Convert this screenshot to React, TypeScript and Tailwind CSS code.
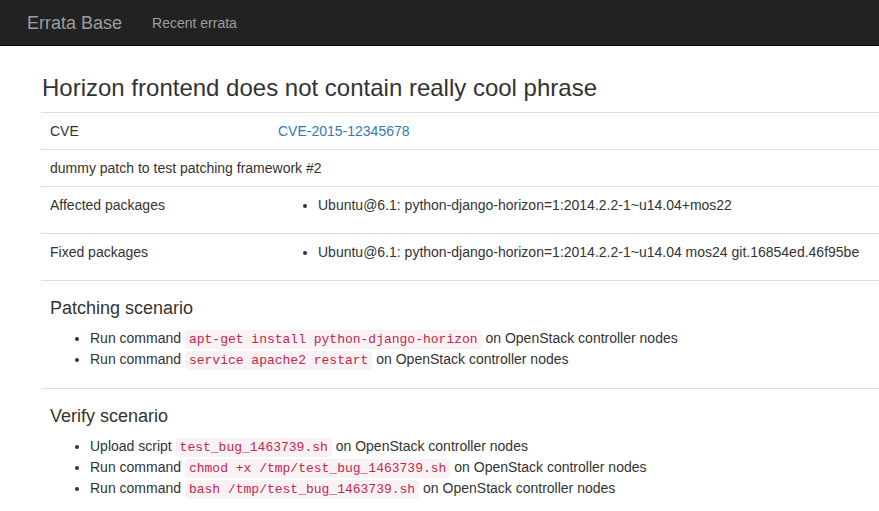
import React from 'react';

function Code({ children }: { children: React.ReactNode }) {
  return (
    <code className="rounded bg-[#f9f2f4] px-1 py-0.5 font-['Liberation_Mono',monospace] text-[13px] leading-none text-[#c7254e]">
      {children}
    </code>
  );
}

function Scenario({ title, steps }: { title: string; steps: [string, string][] }) {
  return (
    <tr>
      <td colSpan={2} className="border-t border-[#ddd] py-2 pr-2 pl-[9px] align-top">
        <h4 className="mt-[9px] mb-[10px] text-[18px] leading-[20px]">{title}</h4>
        <ul className="mb-[10px] list-disc pl-10">
          {steps.map(([label, cmd]) => (
            <li key={cmd} className="leading-[21px]">
              {label} <Code>{cmd}</Code> on OpenStack controller nodes
            </li>
          ))}
        </ul>
      </td>
    </tr>
  );
}

function App() {
  return (
    <div className="min-h-screen bg-white font-['Liberation_Sans',Arial,sans-serif] text-[14px] leading-[20px] text-[#333]">
      <nav className="flex h-[46px] items-center border-b border-[#080808] bg-[#222] pl-[27px]">
        <span className="text-[18px] text-[#9d9d9d]">Errata Base</span>
        <span className="ml-[30px] text-[#9d9d9d]">Recent errata</span>
      </nav>

      <div className="pl-[41px]">
        <h1 className="mt-[29px] mb-[11px] pl-[1px] text-[24px] leading-[26px]">
          Horizon frontend does not contain really cool phrase
        </h1>

        <table className="w-full border-collapse text-left">
          <tbody>
            <tr>
              <td className="w-[228px] border-t border-[#ddd] py-2 pr-2 pl-[9px]">CVE</td>
              <td className="border-t border-[#ddd] py-2 pr-2 pl-[9px]">
                <a href="#" className="text-[#337ab7]">CVE-2015-12345678</a>
              </td>
            </tr>
            <tr>
              <td colSpan={2} className="border-t border-[#ddd] py-2 pr-2 pl-[9px]">
                dummy patch to test patching framework #2
              </td>
            </tr>
            <tr>
              <td className="border-t border-[#ddd] py-2 pr-2 pl-[9px] align-top">Affected packages</td>
              <td className="border-t border-[#ddd] py-2 pr-2 pl-[9px] align-top">
                <ul className="mb-[10px] list-disc pl-10">
                  <li>Ubuntu@6.1: python-django-horizon=1:2014.2.2-1~u14.04+mos22</li>
                </ul>
              </td>
            </tr>
            <tr>
              <td className="border-t border-[#ddd] py-2 pr-2 pl-[9px] align-top">Fixed packages</td>
              <td className="border-t border-[#ddd] py-2 pr-2 pl-[9px] align-top">
                <ul className="mb-[10px] list-disc pl-10">
                  <li>Ubuntu@6.1: python-django-horizon=1:2014.2.2-1~u14.04 mos24 git.16854ed.46f95be</li>
                </ul>
              </td>
            </tr>
            <Scenario
              title="Patching scenario"
              steps={[
                ['Run command', 'apt-get install python-django-horizon'],
                ['Run command', 'service apache2 restart'],
              ]}
            />
            <Scenario
              title="Verify scenario"
              steps={[
                ['Upload script', 'test_bug_1463739.sh'],
                ['Run command', 'chmod +x /tmp/test_bug_1463739.sh'],
                ['Run command', 'bash /tmp/test_bug_1463739.sh'],
              ]}
            />
          </tbody>
        </table>
      </div>
    </div>
  );
}

export default App;
